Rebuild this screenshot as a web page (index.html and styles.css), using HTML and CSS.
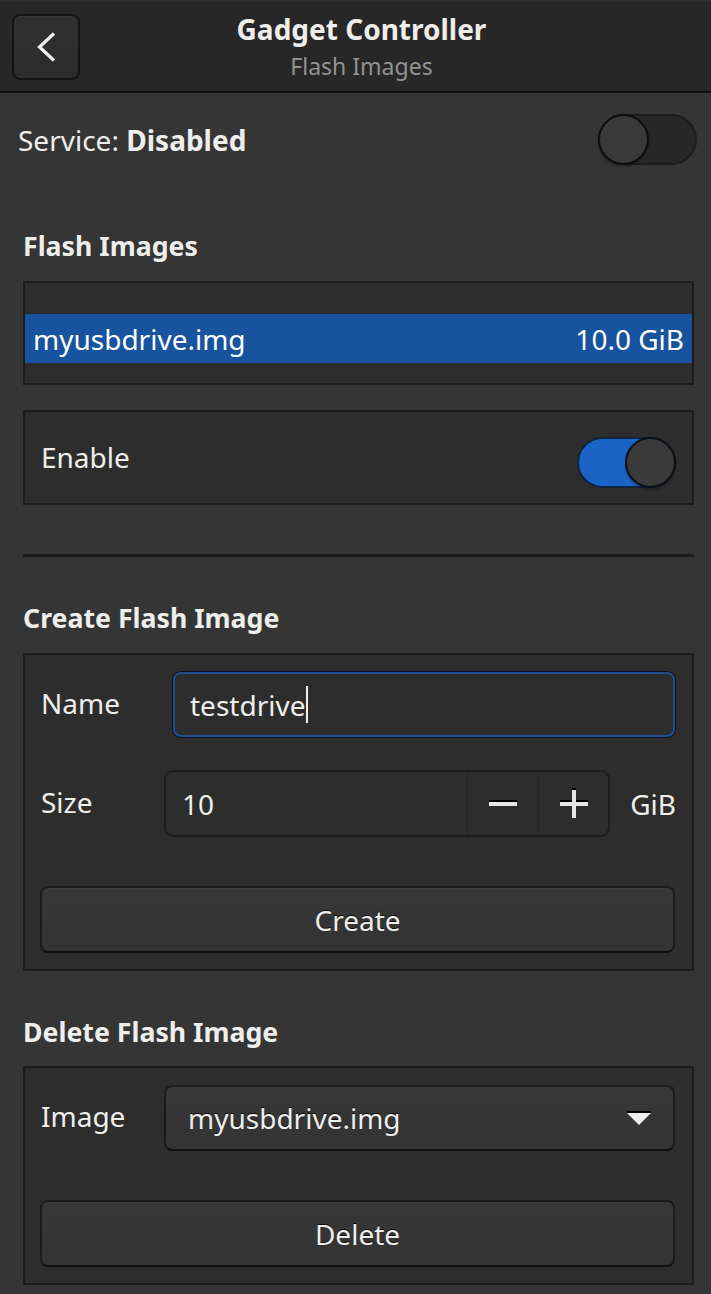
FILE: index.html
```html
<!DOCTYPE html>
<html lang="en">
<head>
<meta charset="utf-8">
<title>Gadget Controller</title>
<link rel="stylesheet" href="styles.css">
</head>
<body>
<header class="headerbar">
  <button class="back-btn" aria-label="Back">
    <svg width="20" height="32" viewBox="0 0 20 32"><polyline points="17,2.5 2.5,16 17,29.5" fill="none" stroke="#eeeeec" stroke-width="3.2" stroke-linejoin="miter"/></svg>
  </button>
  <div class="title-box">
    <div class="title">Gadget Controller</div>
    <div class="subtitle">Flash Images</div>
  </div>
  <div class="spacer"></div>
</header>

<main class="content">
  <div class="service-row">
    <span class="service-label">Service: <b>Disabled</b></span>
    <span class="switch"><span class="knob"></span></span>
  </div>

  <h2 class="heading">Flash Images</h2>
  <div class="frame list">
    <div class="list-row selected"><span>myusbdrive.img</span><span>10.0 GiB</span></div>
  </div>

  <div class="frame enable-frame">
    <span class="enable-label">Enable</span>
    <span class="switch on"><span class="knob"></span></span>
  </div>

  <div class="sep"></div>

  <h2 class="heading heading-after-sep">Create Flash Image</h2>
  <div class="frame form">
    <div class="form-row">
      <span class="label">Name</span>
      <div class="entry focused"><span class="entry-text">testdrive</span><span class="cursor"></span></div>
    </div>
    <div class="form-row size-row">
      <span class="label">Size</span>
      <div class="spin">
        <span class="spin-value">10</span>
        <span class="spin-btn"><svg width="30" height="8" viewBox="0 0 30 8"><rect x="1" y="0" width="28" height="2" fill="#000"/><rect x="1" y="2" width="28" height="4" fill="#e6e6e6"/></svg></span>
        <span class="spin-btn"><svg width="30" height="32" viewBox="0 0 30 32"><rect x="13" y="0" width="4" height="2" fill="#000"/><rect x="1" y="12" width="28" height="2" fill="#000"/><rect x="13" y="2" width="4" height="28" fill="#e6e6e6"/><rect x="1" y="14" width="28" height="4" fill="#e6e6e6"/></svg></span>
      </div>
      <span class="unit">GiB</span>
    </div>
    <button class="btn action-btn">Create</button>
  </div>

  <h2 class="heading heading-delete">Delete Flash Image</h2>
  <div class="frame form">
    <div class="form-row">
      <span class="label">Image</span>
      <div class="combo">
        <span>myusbdrive.img</span>
        <svg width="26" height="16" viewBox="0 0 26 16"><rect x="1" y="0" width="24" height="2" fill="#000"/><polygon points="1,2 25,2 13,14" fill="#eeeeec"/></svg>
      </div>
    </div>
    <button class="btn action-btn">Delete</button>
  </div>
</main>
</body>
</html>
```

FILE: styles.css
```css
* { box-sizing: border-box; }

html, body {
  margin: 0;
  padding: 0;
}

body {
  width: 711px;
  height: 1294px;
  overflow: hidden;
  background: #353535;
  color: #eeeeec;
  font-family: "Noto Sans", "Open Sans", "DejaVu Sans", sans-serif;
  font-size: 28px;
}

/* Header bar */
.headerbar {
  height: 93px;
  background: #272727;
  border-top: 2px solid #303030;
  border-bottom: 2px solid #111111;
  display: grid;
  grid-template-columns: 1fr auto 1fr;
  align-items: center;
  padding-left: 12px;
}

.back-btn {
  width: 68px;
  height: 66px;
  margin-top: 1px;
  border: 2px solid #141414;
  border-radius: 8px;
  background: linear-gradient(#303030, #2c2c2c);
  box-shadow: inset 0 1px rgba(255,255,255,0.03);
  display: flex;
  align-items: center;
  justify-content: center;
  padding: 0;
  padding-left: 1px;
  justify-self: start;
}

.title-box {
  align-self: start;
  margin-top: 10px;
  text-align: center;
}

.title {
  font-weight: 700;
  font-size: 28px;
  line-height: 34px;
  color: #eeeeec;
}

.subtitle {
  margin-top: 6px;
  font-size: 23px;
  line-height: 28px;
  color: #929292;
}

/* Content */
.content {
  padding: 21px 17px 0 23px;
}

.service-row {
  display: flex;
  align-items: center;
  justify-content: space-between;
  height: 51px;
  margin-left: -5px;
  margin-right: -3px;
}

.service-label b { font-weight: 700; }

/* Switch */
.switch {
  width: 99px;
  height: 51px;
  border-radius: 26px;
  border: 2px solid #1d1d1d;
  background: #272727;
  display: flex;
  justify-content: flex-start;
  align-items: center;
}

.switch .knob {
  width: 51px;
  height: 51px;
  margin: -2px;
  border-radius: 50%;
  border: 2px solid #0d0d0d;
  background: #393939;
  box-shadow: 0 2px 2px rgba(0,0,0,0.25);
}

.switch.on {
  justify-content: flex-end;
  background: #1c63c7;
  border-color: #0f2440;
}

.switch.on .knob {
  border-color: #0b0f16;
  background: #3a3a3a;
}

.heading {
  margin: 64px 0 18px;
  font-size: 26.7px;
  font-weight: 700;
  line-height: 34px;
  color: #eeeeec;
}

.heading-after-sep { margin-top: 44px; }
.heading-delete { margin-top: 44px; margin-bottom: 17px; }

.frame {
  border: 2px solid #1c1c1c;
  background: #2d2d2d;
}

.list {
  padding: 31px 0 20px;
}

.list-row {
  height: 49px;
  padding: 0 8px;
  display: flex;
  align-items: center;
  justify-content: space-between;
}

.list-row.selected {
  background: #17539e;
  color: #ffffff;
}

.enable-frame {
  margin-top: 25px;
  padding: 25px 16px 15px 16px;
  display: flex;
  align-items: center;
  justify-content: space-between;
}

.enable-label { margin-bottom: 12px; }

.sep {
  margin-top: 49px;
  height: 3px;
  background: #1c1c1c;
}

/* Forms */
.form {
  padding: 17px 17px 16px 15px;
}

.form-row {
  display: flex;
  align-items: center;
}

.form-row .label {
  width: 124px;
  flex: none;
  padding-left: 1px;
  margin-bottom: 4px;
}

.entry {
  flex: 1;
  height: 65px;
  margin-left: 9px;
  border-radius: 8px;
  background: #2d2d2d;
  border: 2px solid #1e4f8f;
  box-shadow: 0 0 0 1px #0b1320;
  display: flex;
  align-items: center;
  padding-left: 15px;
}

.cursor {
  display: inline-block;
  width: 2px;
  height: 37px;
  margin-left: 1px;
  background: #eeeeec;
}

.size-row {
  margin-top: 33px;
}

.spin {
  flex: 1;
  height: 67px;
  border: 2px solid #1c1c1c;
  border-radius: 9px;
  background: #2d2d2d;
  display: flex;
  align-items: stretch;
}

.spin-value {
  flex: 1;
  display: flex;
  align-items: center;
  padding-left: 16px;
}

.spin-btn {
  width: 71px;
  border-left: 1px solid #242424;
  display: flex;
  align-items: center;
  justify-content: center;
}

.spin-btn:last-child { width: 70px; }

.unit {
  margin-left: 20px;
  margin-right: -1px;
}

.btn {
  font: inherit;
  color: #eeeeec;
  text-shadow: 0 -1px rgba(0,0,0,0.8);
  border: 2px solid #1b1b1b;
  border-bottom-color: #0f0f0f;
  border-radius: 8px;
  background: linear-gradient(#373737, #333333);
  box-shadow: inset 0 1px rgba(255,255,255,0.03);
}

.action-btn {
  display: block;
  width: 100%;
  height: 67px;
  margin-top: 49px;
  padding: 0;
}

.combo {
  flex: 1;
  height: 66px;
  border: 2px solid #1b1b1b;
  border-bottom-color: #0f0f0f;
  border-radius: 8px;
  background: linear-gradient(#373737, #333333);
  display: flex;
  align-items: center;
  justify-content: space-between;
  padding: 0 21px 0 22px;
  text-shadow: 0 -1px rgba(0,0,0,0.8);
}

.combo svg { margin-top: 2px; }
```
